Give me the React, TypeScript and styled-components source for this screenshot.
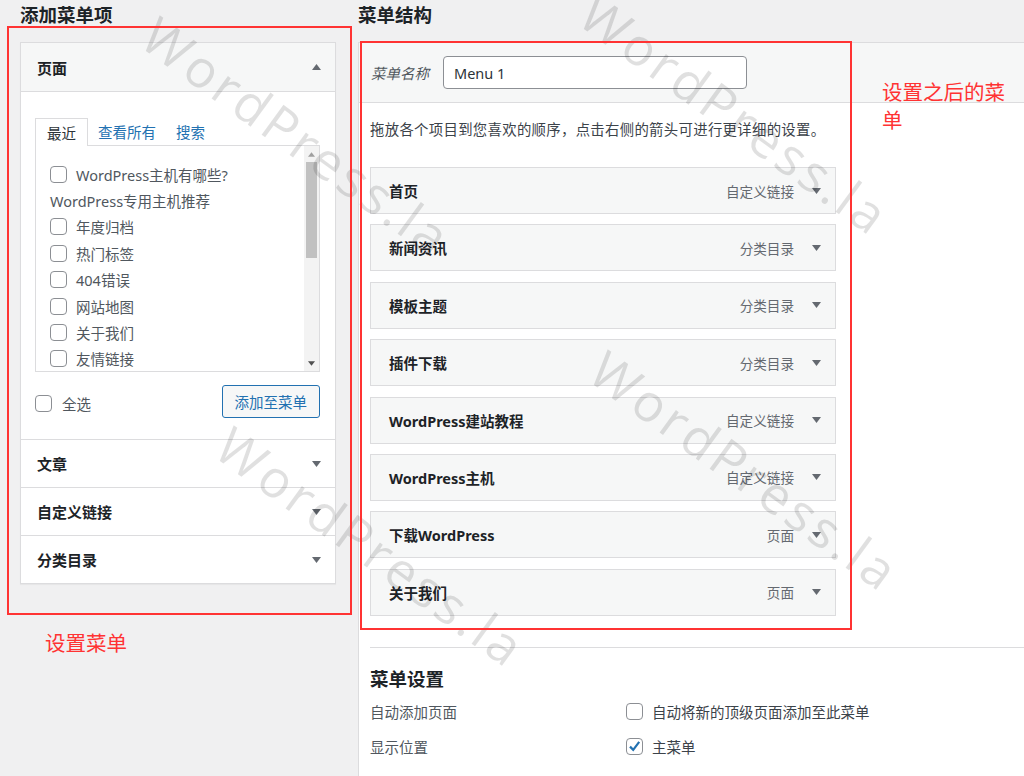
import { FC } from "react";
import styled, { createGlobalStyle, css } from "styled-components";

const GlobalStyle = createGlobalStyle`
  * { box-sizing: border-box; }
  body {
    margin: 0;
    background: #f0f0f1;
    font-family: "Noto Sans", "Noto Sans CJK SC", sans-serif;
    color: #3c434a;
  }
`;

const recentItems: { label: string; noBox?: boolean }[] = [
  { label: "WordPress主机有哪些?" },
  { label: "WordPress专用主机推荐", noBox: true },
  { label: "年度归档" },
  { label: "热门标签" },
  { label: "404错误" },
  { label: "网站地图" },
  { label: "关于我们" },
  { label: "友情链接" },
];

const menuItems = [
  { title: "首页", type: "自定义链接" },
  { title: "新闻资讯", type: "分类目录" },
  { title: "模板主题", type: "分类目录" },
  { title: "插件下载", type: "分类目录" },
  { title: "WordPress建站教程", type: "自定义链接" },
  { title: "WordPress主机", type: "自定义链接" },
  { title: "下载WordPress", type: "页面" },
  { title: "关于我们", type: "页面" },
];

const watermarks = [
  { x: 298, y: 136 },
  { x: 736, y: 114 },
  { x: 372, y: 546 },
  { x: 746, y: 470 },
];

const Caret: FC<{ up?: boolean; color?: string }> = ({ up, color = "#646970" }) => (
  <svg width="9" height="6" viewBox="0 0 9 6">
    <path d={up ? "M0 6 L4.5 0 L9 6 Z" : "M0 0 L9 0 L4.5 6 Z"} fill={color} />
  </svg>
);

const CheckBox: FC<{ checked?: boolean }> = ({ checked }) => (
  <Box>
    {checked && (
      <svg width="15" height="15" viewBox="0 0 15 15">
        <path
          d="M3 7.6 L6.2 10.8 L12.2 2.8"
          fill="none"
          stroke="#2271b1"
          strokeWidth="2.2"
        />
      </svg>
    )}
  </Box>
);

export default function App() {
  return (
    <>
      <GlobalStyle />
      <Page>
        <LeftCol>
          <Heading>添加菜单项</Heading>
          <Panel>
            <SectionHeader $open>
              页面
              <Caret up />
            </SectionHeader>
            <SectionBody>
              <Tabs>
                <Tab $active>最近</Tab>
                <Tab>查看所有</Tab>
                <Tab>搜索</Tab>
              </Tabs>
              <ListBox>
                <ListItems>
                  {recentItems.map((item) => (
                    <ListRow key={item.label}>
                      {!item.noBox && <CheckBox />}
                      {item.label}
                    </ListRow>
                  ))}
                </ListItems>
                <ScrollBar>
                  <ScrollArrow>
                    <Caret up color="#a0a0a0" />
                  </ScrollArrow>
                  <ScrollThumb />
                  <ScrollTrack />
                  <ScrollArrow>
                    <Caret color="#505050" />
                  </ScrollArrow>
                </ScrollBar>
              </ListBox>
              <ActionRow>
                <SelectAll>
                  <CheckBox />
                  全选
                </SelectAll>
                <AddButton>添加至菜单</AddButton>
              </ActionRow>
            </SectionBody>
            <SectionHeader>
              文章
              <Caret />
            </SectionHeader>
            <SectionHeader>
              自定义链接
              <Caret />
            </SectionHeader>
            <SectionHeader>
              分类目录
              <Caret />
            </SectionHeader>
          </Panel>
        </LeftCol>

        <RightCol>
          <Heading>菜单结构</Heading>
          <MenuBox>
            <MenuHeader>
              <NameLabel>菜单名称</NameLabel>
              <NameInput defaultValue="Menu 1" />
            </MenuHeader>
            <MenuBody>
              <Instruction>
                拖放各个项目到您喜欢的顺序，点击右侧的箭头可进行更详细的设置。
              </Instruction>
              <ItemList>
                {menuItems.map((item) => (
                  <MenuItem key={item.title}>
                    <ItemTitle>{item.title}</ItemTitle>
                    <ItemMeta>
                      {item.type}
                      <Caret />
                    </ItemMeta>
                  </MenuItem>
                ))}
              </ItemList>
              <Settings>
                <SettingsTitle>菜单设置</SettingsTitle>
                <SettingRow>
                  <SettingLabel>自动添加页面</SettingLabel>
                  <SettingValue>
                    <CheckBox />
                    自动将新的顶级页面添加至此菜单
                  </SettingValue>
                </SettingRow>
                <SettingRow>
                  <SettingLabel>显示位置</SettingLabel>
                  <SettingValue>
                    <CheckBox checked />
                    主菜单
                  </SettingValue>
                </SettingRow>
              </Settings>
            </MenuBody>
          </MenuBox>
        </RightCol>

        {watermarks.map((w, i) => (
          <Watermark key={i} style={{ left: w.x, top: w.y }}>
            WordPress.la
          </Watermark>
        ))}

        <RedFrame $left={7} $top={26} $width={345} $height={589} />
        <RedFrame $left={360} $top={41} $width={492} $height={589} />
        <Note $left={45} $top={629}>
          设置菜单
        </Note>
        <Note $left={882} $top={78} $width={136}>
          设置之后的菜单
        </Note>
      </Page>
    </>
  );
}

const Page = styled.div`
  position: relative;
  width: 1024px;
  height: 776px;
  overflow: hidden;
  display: flex;
  align-items: flex-start;
`;

const LeftCol = styled.div`
  width: 316px;
  margin-left: 20px;
  display: flex;
  flex-direction: column;
`;

const RightCol = styled.div`
  flex: 1;
  margin-left: 22px;
  display: flex;
  flex-direction: column;
  align-self: stretch;
`;

const Heading = styled.h2`
  margin: 0 0 12px;
  height: 30px;
  line-height: 30px;
  font-size: 18.5px;
  font-weight: 700;
  color: #1d2327;
`;

const Panel = styled.div`
  border: 1px solid #dcdcde;
  background: #fff;
  box-shadow: 0 1px 1px rgba(0, 0, 0, 0.04);
`;

const SectionHeader = styled.div<{ $open?: boolean }>`
  height: 48px;
  padding: 0 14px 0 16px;
  display: flex;
  align-items: center;
  justify-content: space-between;
  font-size: 15px;
  font-weight: 700;
  color: #1d2327;
  border-top: 1px solid #dcdcde;
  &:first-child {
    border-top: none;
  }
  ${(props) =>
    props.$open &&
    css`
      height: 49px;
      background: #f6f7f7;
      border-bottom: 1px solid #dcdcde;
    `}
`;

const SectionBody = styled.div`
  padding: 26px 15px 22px 14px;
`;

const Tabs = styled.div`
  display: flex;
  height: 27px;
  align-items: flex-end;
`;

const Tab = styled.div<{ $active?: boolean }>`
  height: 27px;
  padding: 0 10px;
  display: flex;
  align-items: center;
  font-size: 14.5px;
  color: #2271b1;
  ${(props) =>
    props.$active &&
    css`
      padding: 0 11px;
      color: #2c3338;
      background: #fff;
      border: 1px solid #dcdcde;
      border-bottom: none;
      height: 28px;
      margin-bottom: -1px;
      position: relative;
      z-index: 1;
    `}
`;

const ListBox = styled.div`
  height: 227px;
  border: 1px solid #dcdcde;
  display: flex;
  overflow: hidden;
`;

const ListItems = styled.div`
  flex: 1;
  padding: 15px 0 0 14px;
`;

const ListRow = styled.div`
  height: 26.4px;
  display: flex;
  align-items: center;
  gap: 9px;
  font-size: 14.5px;
  color: #50575e;
  white-space: nowrap;
`;

const ScrollBar = styled.div`
  width: 15px;
  display: flex;
  flex-direction: column;
  background: #f3f3f3;
`;

const ScrollArrow = styled.div`
  height: 16px;
  display: flex;
  align-items: center;
  justify-content: center;
  svg {
    width: 7px;
    height: 5px;
  }
`;

const ScrollThumb = styled.div`
  height: 96px;
  margin: 0 2px;
  background: #c1c1c1;
`;

const ScrollTrack = styled.div`
  flex: 1;
`;

const ActionRow = styled.div`
  margin-top: 13px;
  height: 32px;
  display: flex;
  align-items: center;
  justify-content: space-between;
`;

const SelectAll = styled.label`
  display: flex;
  align-items: center;
  gap: 10px;
  font-size: 14.5px;
  color: #50575e;
  margin-top: 4px;
`;

const AddButton = styled.button`
  height: 33px;
  padding: 0 12px;
  border: 1px solid #2271b1;
  border-radius: 3px;
  background: #f6f7f7;
  color: #2271b1;
  font-family: inherit;
  font-size: 14.5px;
`;

const Box = styled.span`
  width: 17px;
  height: 17px;
  flex: none;
  border: 1px solid #8c8f94;
  border-radius: 4px;
  background: #fff;
  display: inline-flex;
  align-items: center;
  justify-content: center;
`;

const MenuBox = styled.div`
  flex: 1;
  border-top: 1px solid #dcdcde;
  border-left: 1px solid #dcdcde;
  background: #fff;
`;

const MenuHeader = styled.div`
  height: 60px;
  padding-left: 12px;
  display: flex;
  align-items: center;
  background: #f6f7f7;
  border-bottom: 1px solid #dcdcde;
`;

const NameLabel = styled.span`
  font-size: 14.5px;
  font-style: italic;
  color: #50575e;
  margin-right: 14px;
`;

const NameInput = styled.input`
  width: 304px;
  height: 33px;
  padding: 0 10px;
  border: 1px solid #8c8f94;
  border-radius: 4px;
  background: #fff;
  font-family: inherit;
  font-size: 14.5px;
  color: #2c3338;
`;

const MenuBody = styled.div`
  padding-left: 11px;
`;

const Instruction = styled.p`
  margin: 16px 0 0;
  line-height: 22px;
  font-size: 14.4px;
  letter-spacing: 0.3px;
  color: #3c434a;
`;

const ItemList = styled.div`
  margin-top: 26px;
  width: 466px;
  display: flex;
  flex-direction: column;
  gap: 10.4px;
`;

const MenuItem = styled.div`
  height: 47px;
  padding: 0 14px 0 18px;
  display: flex;
  align-items: center;
  justify-content: space-between;
  background: #f6f7f7;
  border: 1px solid #dcdcde;
`;

const ItemTitle = styled.span`
  font-size: 14.5px;
  font-weight: 700;
  color: #1d2327;
`;

const ItemMeta = styled.span`
  display: flex;
  align-items: center;
  gap: 18px;
  font-size: 13.6px;
  color: #646970;
`;

const Settings = styled.div`
  margin-top: 31px;
  border-top: 1px solid #dcdcde;
`;

const SettingsTitle = styled.h3`
  margin: 16px 0 0;
  height: 30px;
  line-height: 30px;
  font-size: 18.5px;
  font-weight: 700;
  color: #1d2327;
`;

const SettingRow = styled.div`
  height: 35px;
  display: flex;
  align-items: center;
`;

const SettingLabel = styled.span`
  width: 256px;
  font-size: 14.5px;
  color: #50575e;
`;

const SettingValue = styled.label`
  display: flex;
  align-items: center;
  gap: 9px;
  font-size: 14.5px;
  color: #3c434a;
`;

const Watermark = styled.div`
  position: absolute;
  transform: translate(-50%, -50%) rotate(36deg);
  font-family: "Open Sans", "Noto Sans", sans-serif;
  font-size: 52px;
  letter-spacing: 4px;
  color: rgba(0, 0, 0, 0.12);
  white-space: nowrap;
  pointer-events: none;
`;

const RedFrame = styled.div<{
  $left: number;
  $top: number;
  $width: number;
  $height: number;
}>`
  position: absolute;
  left: ${(p) => p.$left}px;
  top: ${(p) => p.$top}px;
  width: ${(p) => p.$width}px;
  height: ${(p) => p.$height}px;
  border: 2px solid #ff3333;
  pointer-events: none;
`;

const Note = styled.div<{ $left: number; $top: number; $width?: number }>`
  position: absolute;
  left: ${(p) => p.$left}px;
  top: ${(p) => p.$top}px;
  width: ${(p) => (p.$width ? `${p.$width}px` : "auto")};
  font-size: 20.5px;
  line-height: 28px;
  color: #ff3333;
`;
